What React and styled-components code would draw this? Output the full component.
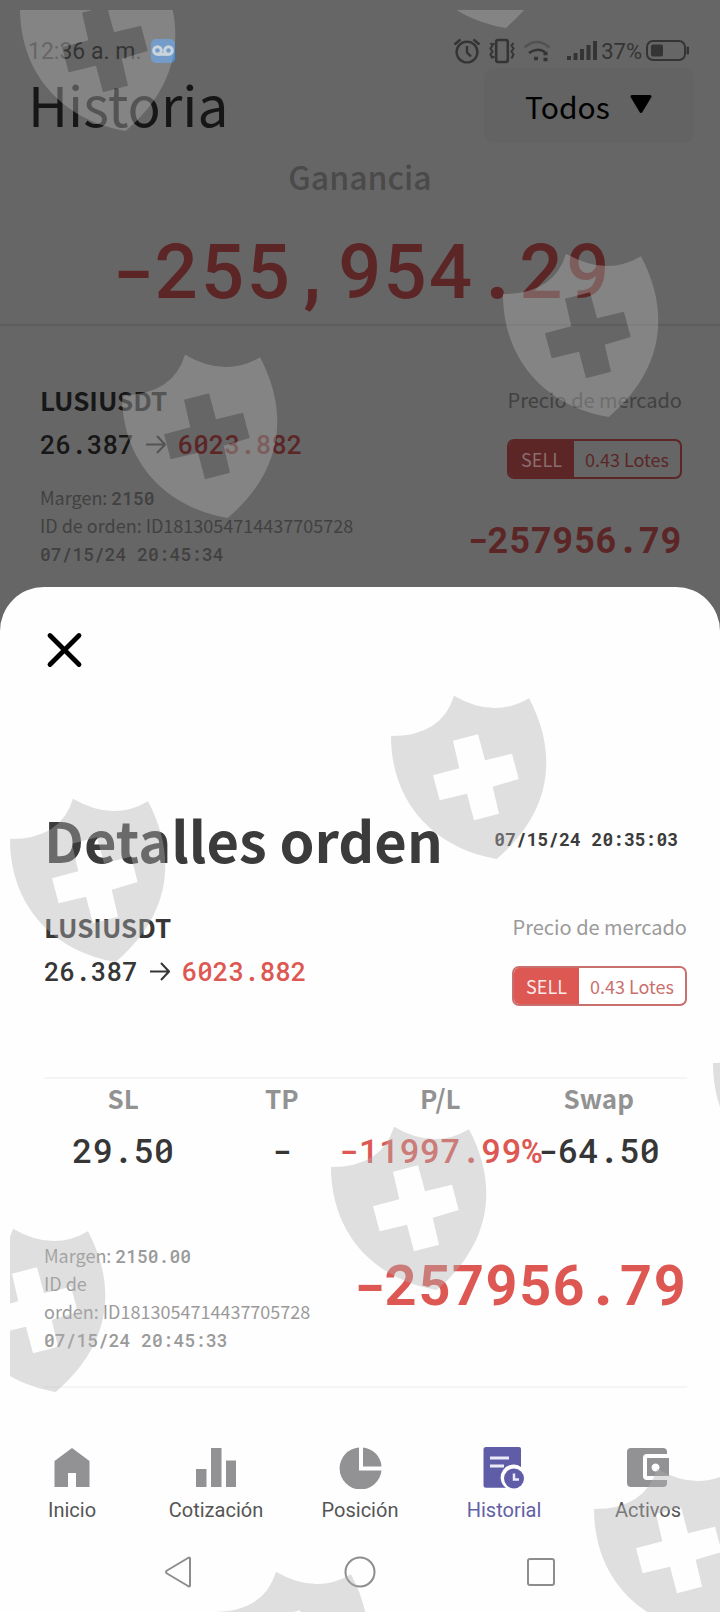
import React from 'react'
import styled, { createGlobalStyle, ThemeProvider } from 'styled-components'

const theme = {
  sans: "'Noto Sans CJK SC', 'Noto Sans', sans-serif",
  ui: 'Roboto, sans-serif',
  mono: "'Roboto Mono', 'DejaVu Sans Mono', monospace",
  backdrop: '#666666',
  light: {
    price: '#363636',
    muted: '#9a9a9a',
    red: '#dd5853',
    border: '#c9706e',
    sellText: '#fbe9e8',
    lotBg: '#ffffff',
  },
  dimmed: {
    price: '#171717',
    muted: '#414141',
    red: '#5c2626',
    border: '#5c2626',
    sellText: '#8a6d6d',
    lotBg: '#666666',
  },
}

const GlobalStyle = createGlobalStyle`
  * {
    box-sizing: border-box;
  }
  body {
    margin: 0;
    background: #666666;
  }
  h1, h2, p {
    margin: 0;
    font-weight: 400;
  }
  button, select {
    border: 0;
    padding: 0;
    background: none;
    font: inherit;
    color: inherit;
  }
`

const Screen = styled.div`
  position: relative;
  display: flex;
  flex-direction: column;
  min-height: 100vh;
  overflow: hidden;
  font-family: ${({ theme }) => theme.sans};
  background: ${({ theme }) => theme.backdrop};
`

/* history page behind the sheet */

const StatusBar = styled.header`
  display: flex;
  justify-content: space-between;
  align-items: center;
  height: 34px;
  margin-top: 34px;
  padding: 0 30px 0 28px;
  font-family: ${({ theme }) => theme.ui};
  color: #343434;
`
const StatusGroup = styled.div`
  display: flex;
  align-items: center;
  gap: ${({ $gap }) => $gap}px;
  font-size: ${({ $size }) => $size}px;
`
const TitleRow = styled.div`
  display: flex;
  justify-content: space-between;
  padding: 0 26px 0 28px;
`
const PageTitle = styled.h1`
  font-size: 55px;
  line-height: 70px;
  color: #161616;
`
const Filter = styled.label`
  position: relative;
  width: 210px;
  height: 75px;
  border-radius: 10px;
  background: #636363;
  svg {
    position: absolute;
    right: 42px;
    top: 27px;
    pointer-events: none;
  }
`
const FilterSelect = styled.select`
  appearance: none;
  width: 100%;
  height: 100%;
  padding-left: 41px;
  font-size: 30px;
  color: #000;
`
const Gains = styled.section`
  padding: 9px 0 7px;
  text-align: center;
  border-bottom: 2px solid #5d5d5d;
`
const GainsLabel = styled.h2`
  font-size: 32px;
  font-weight: 500;
  line-height: 48px;
  color: #4a4a4a;
`
const GainsValue = styled.p`
  margin-top: 21px;
  font-family: ${({ theme }) => theme.mono};
  font-size: 76px;
  font-weight: 500;
  line-height: 96px;
  color: ${({ theme }) => theme.dimmed.red};
`
const HistoryCard = styled.article`
  padding: 52px 38px 20px 40px;
`

/* parts shared by the card and the sheet */

const Split = styled.div`
  display: flex;
  justify-content: space-between;
  align-items: ${({ $align }) => $align || 'flex-start'};
`
const RightColumn = styled.div`
  display: flex;
  flex-direction: column;
  align-items: flex-end;
`
const Symbol = styled.h2`
  font-size: 26px;
  font-weight: 700;
  line-height: 44px;
  color: ${({ $color }) => $color};
`
const PriceLine = styled.p`
  display: flex;
  align-items: center;
  gap: 12px;
  font-family: ${({ theme }) => theme.mono};
  font-size: 26px;
  font-weight: 500;
  line-height: 44px;
  color: ${({ $color }) => $color};
`
const ClosePrice = styled.span`
  color: ${({ $color }) => $color};
`
const PriceType = styled.p`
  font-size: 20px;
  line-height: 44px;
  color: ${({ $color }) => $color};
`
const Badge = styled.div`
  display: flex;
  height: 40px;
  margin-top: 17px;
  overflow: hidden;
  border: 2px solid ${({ $tone }) => $tone.border};
  border-radius: 7px;
  font-size: 18px;
  line-height: 36px;
  color: ${({ $tone }) => $tone.border};
  background: ${({ $tone }) => $tone.lotBg};
`
const Side = styled.span`
  padding: 0 12px;
  color: ${({ $tone }) => $tone.sellText};
  background: ${({ $tone }) => $tone.red};
`
const Lots = styled.span`
  padding: 0 11px;
`
const Meta = styled.div`
  flex: 1;
  min-width: 0;
  font-size: 18px;
  line-height: 28px;
  color: ${({ $color }) => $color};
`
const Mono = styled.span`
  font-family: ${({ theme }) => theme.mono};
  font-weight: 500;
  line-height: 1;
`
const Amount = styled.p`
  font-family: ${({ theme }) => theme.mono};
  font-weight: 700;
  font-size: ${({ $large }) => ($large ? 56 : 36)}px;
  line-height: ${({ $large }) => ($large ? 84 : 56)}px;
  white-space: nowrap;
  color: ${({ $color }) => $color};
`

/* details sheet */

const Sheet = styled.section`
  flex: 1;
  display: flex;
  flex-direction: column;
  border-radius: 44px 44px 0 0;
  background: #fefefe;
`
const SheetBody = styled.div`
  padding: 43px 33px 0 44px;
`
const CloseButton = styled.button`
  display: block;
  width: 40px;
  height: 40px;
  cursor: pointer;
`
const SheetHeader = styled.div`
  display: flex;
  justify-content: space-between;
  align-items: center;
  margin: 129px 9px 26px 0;
`
const SheetTitle = styled.h1`
  font-size: 56px;
  font-weight: 700;
  line-height: 80px;
  color: #3b3b3b;
`
const OpenedAt = styled.time`
  font-family: ${({ theme }) => theme.mono};
  font-size: 18px;
  font-weight: 700;
  color: #3b3b3b;
`
const Figures = styled.div`
  margin-top: 71px;
  padding: 1px 9px 65px 0;
  border-top: 2px solid #f5f5f5;
`
const FiguresTable = styled.table`
  width: 100%;
  table-layout: fixed;
  border-collapse: collapse;
  th,
  td {
    padding: 0;
  }
  th {
    padding-bottom: 8px;
    font-size: 26px;
    font-weight: 700;
    line-height: 36px;
    color: #929292;
  }
`
const Figure = styled.div`
  display: flex;
  justify-content: center;
  font-family: ${({ theme }) => theme.mono};
  font-size: 34px;
  font-weight: 500;
  line-height: 52px;
  white-space: nowrap;
  color: ${({ $loss, theme }) => ($loss ? theme.light.red : '#363636')};
`
const SheetSummary = styled(Split)`
  padding-bottom: 33px;
  border-bottom: 2px solid #f5f5f5;
`
const TabBar = styled.nav`
  display: grid;
  grid-template-columns: repeat(5, 1fr);
  padding-top: 57px;
`
const Tab = styled.a`
  display: flex;
  flex-direction: column;
  align-items: center;
  gap: 6px;
  font-family: ${({ theme }) => theme.ui};
  font-size: 20px;
  line-height: 30px;
  text-decoration: none;
  color: ${({ $active }) => ($active ? '#6260a4' : '#555555')};
  svg {
    color: ${({ $active }) => ($active ? '#5f5da8' : '#929295')};
  }
`
const SystemBar = styled.div`
  display: grid;
  grid-template-columns: repeat(3, 1fr);
  height: 60px;
  margin: 17px 89px 10px;
`
const SystemButton = styled.button`
  display: grid;
  place-items: center;
`

/* shields repeated over everything */

const ShieldLayer = styled.div`
  position: absolute;
  inset: 10px 0 0 10px;
  overflow: hidden;
  pointer-events: none;
`
const Shield = styled.svg`
  position: absolute;
  left: ${({ $x }) => $x - 10}px;
  top: ${({ $y }) => $y - 10}px;
`

const shields = [
  [20, -33],
  [400, -136],
  [503, 253],
  [122, 354],
  [391, 695],
  [10, 798],
  [713, 1022],
  [331, 1126],
  [-50, 1228],
  [594, 1468],
  [213, 1571],
]

const ShieldMark = ({ x, y }) => (
  <Shield $x={x} $y={y} width='156' height='166' viewBox='0 0 156 166'>
    <path
      fill='#b1b1b1'
      fillOpacity='0.4'
      fillRule='evenodd'
      d='M0 41Q51 41 63 .7Q103 24 138 3.3C168 60 160 118 105.7 164C46 154 0 110 0 41ZM62 45.7L68.3 73.3L42 80.3L48.7 105.3L76 98.7L83 125.3L108 118.7L101.7 91.7L127.7 84L121 58.7L94 65.3L87 39.3Z'
    />
  </Shield>
)

/* icons */

const VoicemailIcon = () => (
  <svg width='24' height='24' viewBox='0 0 24 24'>
    <rect width='24' height='24' rx='5' fill='#4a8fd8' />
    <g fill='none' stroke='#dcecfb' strokeWidth='3'>
      <circle cx='6.5' cy='11.5' r='3.8' />
      <circle cx='17.5' cy='11.5' r='3.8' />
      <path d='M6.5 15.3h11' />
    </g>
  </svg>
)
const AlarmIcon = () => (
  <svg width='28' height='26' viewBox='0 0 28 26' fill='none' stroke='currentColor' strokeWidth='2.4'>
    <circle cx='14' cy='14' r='10.4' />
    <path d='M14 8v6.5l4 4M1.5 6.5l6-5M26.5 6.5l-6-5' />
  </svg>
)
const VibrateIcon = () => (
  <svg width='26' height='26' viewBox='0 0 26 26' fill='none' stroke='currentColor'>
    <rect x='7.2' y='2' width='11.6' height='22' rx='2' strokeWidth='2.6' />
    <path strokeWidth='2' d='M1.5 5l2 2.5-2 3 2 3-2 3 2 4M4.5 5v2M4.5 18v2M24.5 5l-2 2.5 2 3-2 3 2 3-2 4' />
  </svg>
)
const WifiIcon = () => (
  <svg width='28' height='26' viewBox='0 0 28 26' fill='none' stroke='currentColor' strokeWidth='2.4'>
    <path opacity='0.4' d='M1.5 9.5Q14-1.5 26.5 9.5' />
    <path d='M6 15Q14 9 22 14' />
    <path strokeWidth='3.6' d='M11 20.5h4M20.5 15.5h4M20.5 21.5h4' />
  </svg>
)
const SignalIcon = () => (
  <svg width='30' height='22' viewBox='0 0 30 22' fill='currentColor'>
    <path d='M0 16h4v4h-4zM6.5 13h4v7h-4zM13 9h4v11h-4zM19.5 5h4v15h-4zM26 1h4v19h-4z' />
  </svg>
)
const BatteryIcon = () => (
  <svg width='44' height='22' viewBox='0 0 44 22'>
    <rect x='1' y='1' width='38' height='19' rx='6' fill='none' stroke='currentColor' strokeWidth='2' />
    <rect x='5' y='4.5' width='12' height='12' rx='2' fill='currentColor' />
    <path d='M41 7h1.5v7H41z' stroke='currentColor' fill='currentColor' />
  </svg>
)
const ArrowIcon = () => (
  <svg width='20' height='20' viewBox='0 0 20 20' fill='none' stroke='currentColor' strokeWidth='2'>
    <path d='M0 10.5h19M11 2l8 8.5L11 19' />
  </svg>
)
const CaretIcon = () => (
  <svg width='22' height='19' viewBox='0 0 22 19'>
    <path d='M2 1.5h18L11 16.5z' stroke='#000' strokeWidth='3' strokeLinejoin='round' />
  </svg>
)
const CloseIcon = () => (
  <svg width='40' height='40' viewBox='0 0 40 40' stroke='#000' strokeWidth='4.8' strokeLinecap='round'>
    <path d='M6 5.5l29 29M35 5.5l-29 29' />
  </svg>
)
const TabSvg = ({ children }) => (
  <svg width='44' height='44' viewBox='0 0 44 44' fill='currentColor'>
    {children}
  </svg>
)
const HomeIcon = () => (
  <TabSvg>
    <path d='M22 3L39.5 16V42H26V28H18V42H4.5V16z' />
  </TabSvg>
)
const ChartIcon = () => (
  <TabSvg>
    <path d='M2 24h10.5v18H2zM17 3h10.5v39H17zM32 15.5h10v26.5h-10z' />
  </TabSvg>
)
const PieIcon = () => (
  <TabSvg>
    <path d='M21 2.5V25.5H43.5A21 21 0 1 1 21 2.5zM25 2.5A20.5 20.5 0 0 1 43.5 21.5H25z' />
  </TabSvg>
)
const HistoryIcon = () => (
  <TabSvg>
    <path d='M4 2h33a2 2 0 0 1 2 2v18a11.5 11.5 0 0 0-15 20.8H4a2.5 2.5 0 0 1-2.5-2.5V4.5A2.5 2.5 0 0 1 4 2z' />
    <path d='M8 13h19M8 21h14' stroke='#ebeaf7' strokeWidth='3' />
    <circle cx='32' cy='33.5' r='10' />
    <path d='M32 28.5v6h5' fill='none' stroke='#ebeaf7' strokeWidth='2.5' />
  </TabSvg>
)
const WalletIcon = () => (
  <TabSvg>
    <path d='M5 3h32a4 4 0 0 1 4 4v2H21a4 4 0 0 0-4 4v18a4 4 0 0 0 4 4h20v3a4 4 0 0 1-4 4H5a4 4 0 0 1-4-4V7a4 4 0 0 1 4-4z' />
    <path fillRule='evenodd' d='M21 13h22v18H21zM29.5 18.5a4 4 0 1 0 .1 0z' />
  </TabSvg>
)

const tabs = [
  { label: 'Inicio', icon: HomeIcon },
  { label: 'Cotización', icon: ChartIcon },
  { label: 'Posición', icon: PieIcon },
  { label: 'Historial', icon: HistoryIcon, active: true },
  { label: 'Activos', icon: WalletIcon },
]

const OrderHead = ({ palette }) => (
  <Split>
    <div>
      <Symbol $color={palette.price}>LUSIUSDT</Symbol>
      <PriceLine $color={palette.price}>
        26.387
        <ArrowIcon />
        <ClosePrice $color={palette.red}>6023.882</ClosePrice>
      </PriceLine>
    </div>
    <RightColumn>
      <PriceType $color={palette.muted}>Precio de mercado</PriceType>
      <Badge $tone={palette}>
        <Side $tone={palette}>SELL</Side>
        <Lots>0.43 Lotes</Lots>
      </Badge>
    </RightColumn>
  </Split>
)

const CardSummary = styled(Split)`
  margin-top: 4px;
`

const App = () => {
  return (
    <ThemeProvider theme={theme}>
      <GlobalStyle />
      <Screen>
        <StatusBar>
          <StatusGroup $gap={9} $size={23}>
            12:36 a. m.
            <VoicemailIcon />
          </StatusGroup>
          <StatusGroup $gap={16} $size={22}>
            <StatusGroup $gap={8} $size={22}>
              <AlarmIcon />
              <VibrateIcon />
              <WifiIcon />
            </StatusGroup>
            <StatusGroup $gap={4} $size={22}>
              <SignalIcon />
              37%
              <BatteryIcon />
            </StatusGroup>
          </StatusGroup>
        </StatusBar>
        <TitleRow>
          <PageTitle>Historia</PageTitle>
          <Filter>
            <FilterSelect aria-label='Filtro' defaultValue='todos'>
              <option value='todos'>Todos</option>
            </FilterSelect>
            <CaretIcon />
          </Filter>
        </TitleRow>
        <Gains>
          <GainsLabel>Ganancia</GainsLabel>
          <GainsValue>-255,954.29</GainsValue>
        </Gains>
        <HistoryCard>
          <OrderHead palette={theme.dimmed} />
          <CardSummary $align='flex-end'>
            <Meta $color={theme.dimmed.muted}>
              <p>
                Margen: <Mono>2150</Mono>
              </p>
              <p>ID de orden: ID1813054714437705728</p>
              <p>
                <Mono>07/15/24 20:45:34</Mono>
              </p>
            </Meta>
            <Amount $color={theme.dimmed.red}>-257956.79</Amount>
          </CardSummary>
        </HistoryCard>

        <Sheet role='dialog' aria-labelledby='order-title'>
          <SheetBody>
            <CloseButton aria-label='Cerrar'>
              <CloseIcon />
            </CloseButton>
            <SheetHeader>
              <SheetTitle id='order-title'>Detalles orden</SheetTitle>
              <OpenedAt>07/15/24 20:35:03</OpenedAt>
            </SheetHeader>
            <OrderHead palette={theme.light} />
            <Figures>
              <FiguresTable>
                <thead>
                  <tr>
                    <th>SL</th>
                    <th>TP</th>
                    <th>P/L</th>
                    <th>Swap</th>
                  </tr>
                </thead>
                <tbody>
                  <tr>
                    <td>
                      <Figure>29.50</Figure>
                    </td>
                    <td>
                      <Figure>-</Figure>
                    </td>
                    <td>
                      <Figure $loss>-11997.99%</Figure>
                    </td>
                    <td>
                      <Figure>-64.50</Figure>
                    </td>
                  </tr>
                </tbody>
              </FiguresTable>
            </Figures>
            <SheetSummary>
              <Meta $color={theme.light.muted}>
                <p>
                  Margen: <Mono>2150.00</Mono>
                </p>
                <p>ID de orden:&nbsp;ID1813054714437705728</p>
                <p>
                  <Mono>07/15/24 20:45:33</Mono>
                </p>
              </Meta>
              <Amount $large $color={theme.light.red}>
                -257956.79
              </Amount>
            </SheetSummary>
          </SheetBody>
          <TabBar>
            {tabs.map(({ label, icon: Icon, active }) => (
              <Tab key={label} href={`#${label.toLowerCase()}`} $active={active}>
                <Icon />
                {label}
              </Tab>
            ))}
          </TabBar>
          <SystemBar>
            <SystemButton aria-label='Atrás'>
              <svg width='30' height='32' viewBox='0 0 30 32' fill='none' stroke='#8d8d8d' strokeWidth='2'>
                <path strokeLinejoin='round' d='M26 2.5V29.5Q26 31 24 30L3 17.5Q1 16 3 14.5L24 2Q26 1 26 2.5z' />
              </svg>
            </SystemButton>
            <SystemButton aria-label='Inicio'>
              <svg width='32' height='32' viewBox='0 0 32 32' fill='none' stroke='#8d8d8d' strokeWidth='2'>
                <circle cx='16' cy='16' r='14.5' />
              </svg>
            </SystemButton>
            <SystemButton aria-label='Recientes'>
              <svg width='28' height='28' viewBox='0 0 28 28' fill='none' stroke='#8d8d8d' strokeWidth='2'>
                <rect x='1' y='1' width='26' height='26' rx='2' />
              </svg>
            </SystemButton>
          </SystemBar>
        </Sheet>
        <ShieldLayer aria-hidden='true'>
          {shields.map(([x, y]) => (
            <ShieldMark key={`${x}:${y}`} x={x} y={y} />
          ))}
        </ShieldLayer>
      </Screen>
    </ThemeProvider>
  )
}

export default App
